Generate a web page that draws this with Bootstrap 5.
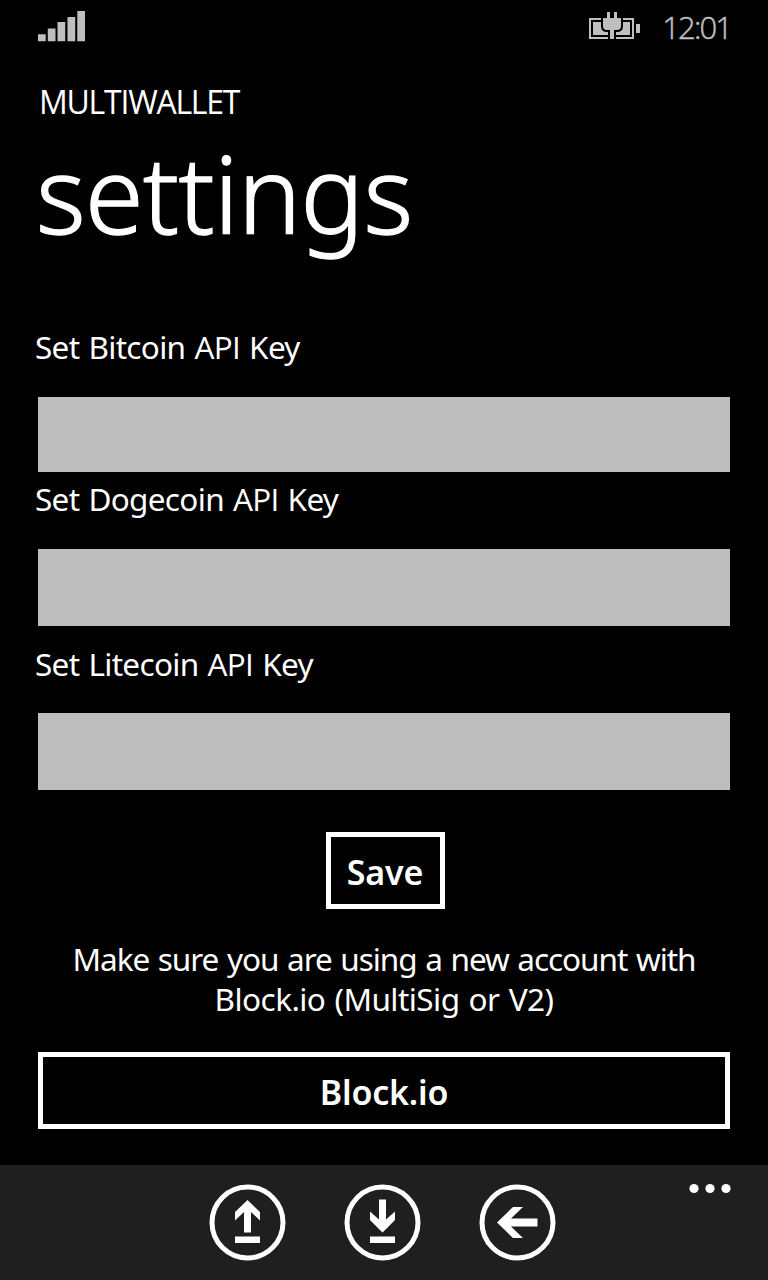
<!DOCTYPE html>
<html lang="en">
<head>
<meta charset="utf-8">
<meta name="viewport" content="width=device-width, initial-scale=1">
<title>Multiwallet settings</title>
<link rel="stylesheet" href="https://cdn.jsdelivr.net/npm/bootstrap@5.3.0/dist/css/bootstrap.min.css">
<style>
body{background:#000;color:#fff;font-family:"Noto Sans","Open Sans",sans-serif;font-size:31.5px;line-height:40px}
.screen{height:1280px;overflow:hidden}
.status{height:82px;padding:9px 38px 0;color:#bfbfbf}
.charge{margin-right:22px}
.clock{font-family:"Open Sans",sans-serif;font-weight:300;font-size:31px;line-height:36px;letter-spacing:-1.9px;margin-right:-1px;-webkit-text-stroke:.5px #bfbfbf}
.caps{font-family:"Open Sans",sans-serif}
.app-name{letter-spacing:-1.25px;height:40px;font-size:32px;padding-left:1px}
.page-title{font-weight:300;font-size:106px;line-height:120px;letter-spacing:-.6px;margin:11px 0 74px -2px;-webkit-text-stroke:1.4px #fff}
.page{padding:0 38px}
.form-label{margin:0 0 30px -3px;display:block;letter-spacing:-.68px;word-spacing:1.5px;white-space:nowrap}
.form-control,.form-control:focus{background:#bdbdbd;border:0;border-radius:0;height:75px;box-shadow:none}
.key-group{margin-bottom:7px}
.key-group.tall .form-control{height:77px}
.key-group.mid{margin-bottom:18px}
.key-group.last{margin-bottom:42px}
.key-group.last .form-label{margin-bottom:29px}
.btn-metro{border:5px solid #fff;border-radius:0;color:#fff;background:#000;font-weight:600;font-size:34px;line-height:1;height:77px;padding:2px 0 0;letter-spacing:-.2px}
.btn-save{width:119px;position:relative;left:1px}
.note{margin:30px 0 33px;white-space:nowrap;letter-spacing:-.55px;word-spacing:1.5px}
.note-lead{letter-spacing:-1.05px;word-spacing:1.5px}
.appbar{background:#1f1f1f;height:115px;position:relative;padding-top:19px;gap:57px;padding-right:3px}
.appbar .round{width:78px;height:78px;padding:0;border:0;display:block;line-height:0}
.more{position:absolute;right:37px;top:18px;padding:0;border:0;line-height:0}
</style>
<script src="https://cdn.jsdelivr.net/npm/bootstrap@5.3.0/dist/js/bootstrap.bundle.min.js"></script>
</head>
<body>
<div class="screen d-flex flex-column">
  <header class="status d-flex justify-content-between align-items-start">
    <svg width="48" height="34" fill="#bfbfbf" aria-label="Signal"><path d="M0 25.3h7.7v7H0zM9.8 19.5h7.7v12.800H9.800zM19.500 13h7.700v19.300h-7.700zM29.500 8h7.700v24.300h-7.700zM39.300 2h7.700v30.300h-7.700z"/></svg>
    <div class="d-flex">
      <svg class="charge" width="52" height="34" fill="#bfbfbf" aria-label="Charging">
        <path transform="translate(1)" d="M0 9h12v2H2v17h17v2H0zM4 13h8v4q0 6 6 6h1v3H4zM34 9h11v21H27v-2h16V11h-9zM34 13h7v13H27v-3h1q6 0 6-6zM47 15h4v9h-4zM18 3h3v6h4V3h3v6h4v8q0 4-4 4h-3v9h-4v-9h-3q-4 0-4-4V9h4z"/>
      </svg>
      <span class="clock">12:01</span>
    </div>
  </header>
  <main class="page flex-grow-1">
    <div class="app-name caps">MULTIWALLET</div>
    <h1 class="page-title">settings</h1>
    <form>
      <div class="key-group"><label class="form-label" for="btc">Set Bitcoin <span class="caps">API</span> Key</label><input id="btc" class="form-control"></div>
      <div class="key-group tall mid"><label class="form-label" for="doge">Set Dogecoin <span class="caps">API</span> Key</label><input id="doge" class="form-control"></div>
      <div class="key-group tall last"><label class="form-label" for="ltc">Set Litecoin <span class="caps">API</span> Key</label><input id="ltc" class="form-control"></div>
      <div class="text-center"><button type="button" class="btn btn-metro btn-save d-block mx-auto">Save</button></div>
    </form>
    <p class="note text-center"><span class="note-lead">Make sure you are using a new account with</span><br>Block.io (MultiSig or V2)</p>
    <button type="button" class="btn btn-metro w-100">Block.io</button>
  </main>
  <footer class="appbar d-flex justify-content-center align-items-start">
    <button class="btn round" aria-label="Upload"><svg width="78" height="78"><circle cx="38.500" cy="38.500" r="35.500" fill="none" stroke="#fff" stroke-width="5"/><path fill="#fff" d="M38.500 16l12.500 12V36.500L42 28v20.500h-7V28l-9 8.500v-8.500zM26 52.500h25V59h-25z"/></svg></button>
    <button class="btn round" aria-label="Download"><svg width="78" height="78"><circle cx="38.500" cy="38.500" r="35.500" fill="none" stroke="#fff" stroke-width="5"/><path fill="#fff" d="M35 15.500h7v20l9-8v8.500L38.500 48.500 26 36v-8.500l9 8zM26 52.500h25V59h-25z"/></svg></button>
    <button class="btn round" aria-label="Back"><svg width="78" height="78"><circle cx="38.500" cy="38.500" r="35.500" fill="none" stroke="#fff" stroke-width="5"/><path fill="#fff" d="M18 38.500l16-15.500h10L32 34.500H58.500v8H32L44 54h-10z"/></svg></button>
    <button class="btn more" aria-label="More"><svg width="42" height="11" fill="#fff"><circle cx="5" cy="5.500" r="4.600"/><circle cx="21" cy="5.500" r="4.600"/><circle cx="37" cy="5.500" r="4.600"/></svg></button>
  </footer>
</div>
</body>
</html>
